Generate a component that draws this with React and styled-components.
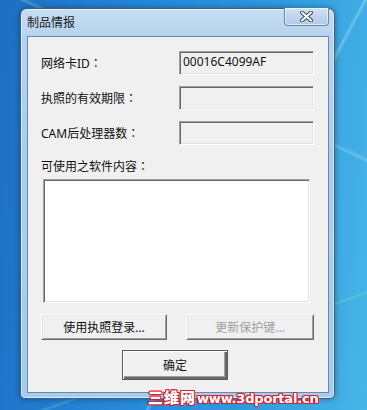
import React from "react";
import styled, { createGlobalStyle } from "styled-components";

const Global = createGlobalStyle`
  html, body { margin: 0; padding: 0; }
  body { font-family: "Noto Sans", "Noto Sans CJK SC", sans-serif; }
`;

const Desktop = styled.div`
  position: relative;
  width: 367px;
  height: 410px;
  box-sizing: border-box;
  padding: 8px 0 0 20px;
  overflow: hidden;
  background:
    linear-gradient(118deg, transparent 62%, rgba(200, 240, 255, 0.35) 62.4%, transparent 63%),
    linear-gradient(160deg, transparent 78%, rgba(120, 255, 170, 0.25) 78.3%, transparent 78.8%),
    linear-gradient(25deg, transparent 72%, rgba(220, 245, 255, 0.25) 72.3%, transparent 73%),
    linear-gradient(95deg, #1e6ec2 0%, #2384d8 30%, #2f9ae0 70%, #47b6e6 100%);
`;

const Window = styled.div`
  width: 315px;
  height: 391px;
  box-sizing: border-box;
  display: flex;
  flex-direction: column;
  border: 1px solid #3d5f84;
  border-radius: 7px 7px 5px 5px;
  background: linear-gradient(180deg, #c6ddf2 0%, #b4d2ee 8%, #a9cdef 40%, #a4cdf0 100%);
  box-shadow: inset 0 0 0 1px rgba(255, 255, 255, 0.55), 0 0 6px rgba(0, 0, 0, 0.35);
  padding: 0 5px 5px 6px;
`;

const TitleBar = styled.div`
  height: 27px;
  display: flex;
  align-items: flex-start;
  justify-content: space-between;
`;

const Title = styled.span`
  font-size: 12px;
  line-height: 14px;
  margin-top: 7px;
  color: #1a1a1a;
`;

const CloseBtn = styled.div`
  width: 45px;
  height: 18px;
  margin-top: -1px;
  box-sizing: border-box;
  border: 1px solid #6d87a3;
  border-top: none;
  border-radius: 0 0 4px 4px;
  background: linear-gradient(180deg, #d3e3f3 0%, #bfd5ec 50%, #aecbea 100%);
  box-shadow: inset 0 0 0 1px rgba(255, 255, 255, 0.6);
  display: flex;
  align-items: center;
  justify-content: center;
`;

const Client = styled.div`
  flex: 1;
  border: 1px solid #6c88a8;
  background: #f0f0f0;
  padding: 14px 14px 0 13px;
  display: flex;
  flex-direction: column;
`;

const Row = styled.div`
  display: flex;
  align-items: center;
  justify-content: space-between;
  height: 24px;
  margin-bottom: ${(p) => p.$gap || 11}px;
`;

const Label = styled.span`
  font-size: 12px;
  color: #111;
  line-height: 16px;
`;

const Colon = styled.span`
  font-family: "Noto Sans CJK TC", sans-serif;
`;

const Field = styled.div`
  width: 135px;
  height: 24px;
  box-sizing: border-box;
  background: #f0f0f0;
  border-style: solid;
  border-width: 1px;
  border-color: #a0a0a0 #ffffff #ffffff #a0a0a0;
  box-shadow: inset 1px 1px 0 #696969, inset -1px -1px 0 #e3e3e3;
  font-size: 12px;
  line-height: 20px;
  padding-left: 3px;
  color: #111;
`;

const ListBox = styled.div`
  width: 267px;
  height: 124px;
  margin: 4px 0 11px 2px;
  box-sizing: border-box;
  background: #ffffff;
  border-style: solid;
  border-width: 1px;
  border-color: #a0a0a0 #ffffff #ffffff #a0a0a0;
  box-shadow: inset 1px 1px 0 #696969, inset -1px -1px 0 #e3e3e3;
`;

const ButtonRow = styled.div`
  display: flex;
  justify-content: space-between;
  margin-bottom: 10px;
`;

const Button = styled.div`
  width: ${(p) => p.$w}px;
  height: ${(p) => p.$h || 26}px;
  box-sizing: border-box;
  display: flex;
  align-items: center;
  justify-content: center;
  font-size: 12px;
  color: ${(p) => (p.$disabled ? "#a0a0a0" : "#111")};
  background: #f0f0f0;
  border-style: solid;
  border-width: 1px;
  border-color: ${(p) =>
    p.$default ? "#5a5a5a" : "#ffffff #696969 #696969 #ffffff"};
  box-shadow: ${(p) =>
    p.$default
      ? "inset 1px 1px 0 #ffffff, inset -2px -2px 0 #696969, inset -3px -3px 0 #a0a0a0"
      : "inset 1px 1px 0 #e3e3e3, inset -1px -1px 0 #a0a0a0"};
  margin-left: ${(p) => p.$ml || 0}px;
`;

const red = "#dc1f2c";

const Watermark = styled.div`
  position: absolute;
  left: 148px;
  top: 388px;
  display: flex;
  align-items: baseline;
  white-space: nowrap;
  color: #ffffff;
  font-weight: 900;
  text-shadow:
    1px 0 ${red}, -1px 0 ${red}, 0 1px ${red}, 0 -1px ${red},
    1px 1px ${red}, -1px -1px ${red}, 1px -1px ${red}, -1px 1px ${red};
`;

const WmCjk = styled.span`
  font-family: "Noto Sans CJK SC", sans-serif;
  font-weight: 900;
  font-size: 15px;
  line-height: 18px;
  letter-spacing: 1px;
`;

const WmLatin = styled.span`
  font-family: "DejaVu Sans", sans-serif;
  font-weight: bold;
  font-size: 13px;
  line-height: 18px;
  letter-spacing: -0.2px;
  margin-left: 1px;
`;

export default function App() {
  return (
    <>
      <Global />
      <Desktop>
        <Window>
          <TitleBar>
            <Title>制品情报</Title>
            <CloseBtn>
              <svg width="13" height="11" viewBox="0 0 13 11">
                <path
                  d="M2 1.5 L11 9.5 M11 1.5 L2 9.5"
                  stroke="#3b4a5c"
                  strokeWidth="4"
                  strokeLinecap="round"
                />
                <path
                  d="M2 1.5 L11 9.5 M11 1.5 L2 9.5"
                  stroke="#ffffff"
                  strokeWidth="2"
                  strokeLinecap="round"
                />
              </svg>
            </CloseBtn>
          </TitleBar>
          <Client>
            <Row>
              <Label>
                网络卡ID<Colon>：</Colon>
              </Label>
              <Field>00016C4099AF</Field>
            </Row>
            <Row>
              <Label>
                执照的有效期限<Colon>：</Colon>
              </Label>
              <Field />
            </Row>
            <Row $gap={13}>
              <Label>
                CAM后处理器数<Colon>：</Colon>
              </Label>
              <Field />
            </Row>
            <Label>
              可使用之软件内容<Colon>：</Colon>
            </Label>
            <ListBox />
            <ButtonRow>
              <Button $w={126}>使用执照登录...</Button>
              <Button $w={128} $disabled>
                更新保护键...
              </Button>
            </ButtonRow>
            <Button $w={106} $h={30} $default $ml={81}>
              确定
            </Button>
          </Client>
        </Window>
        <Watermark>
          <WmCjk>三维网</WmCjk>
          <WmLatin>www.3dportal.cn</WmLatin>
        </Watermark>
      </Desktop>
    </>
  );
}
